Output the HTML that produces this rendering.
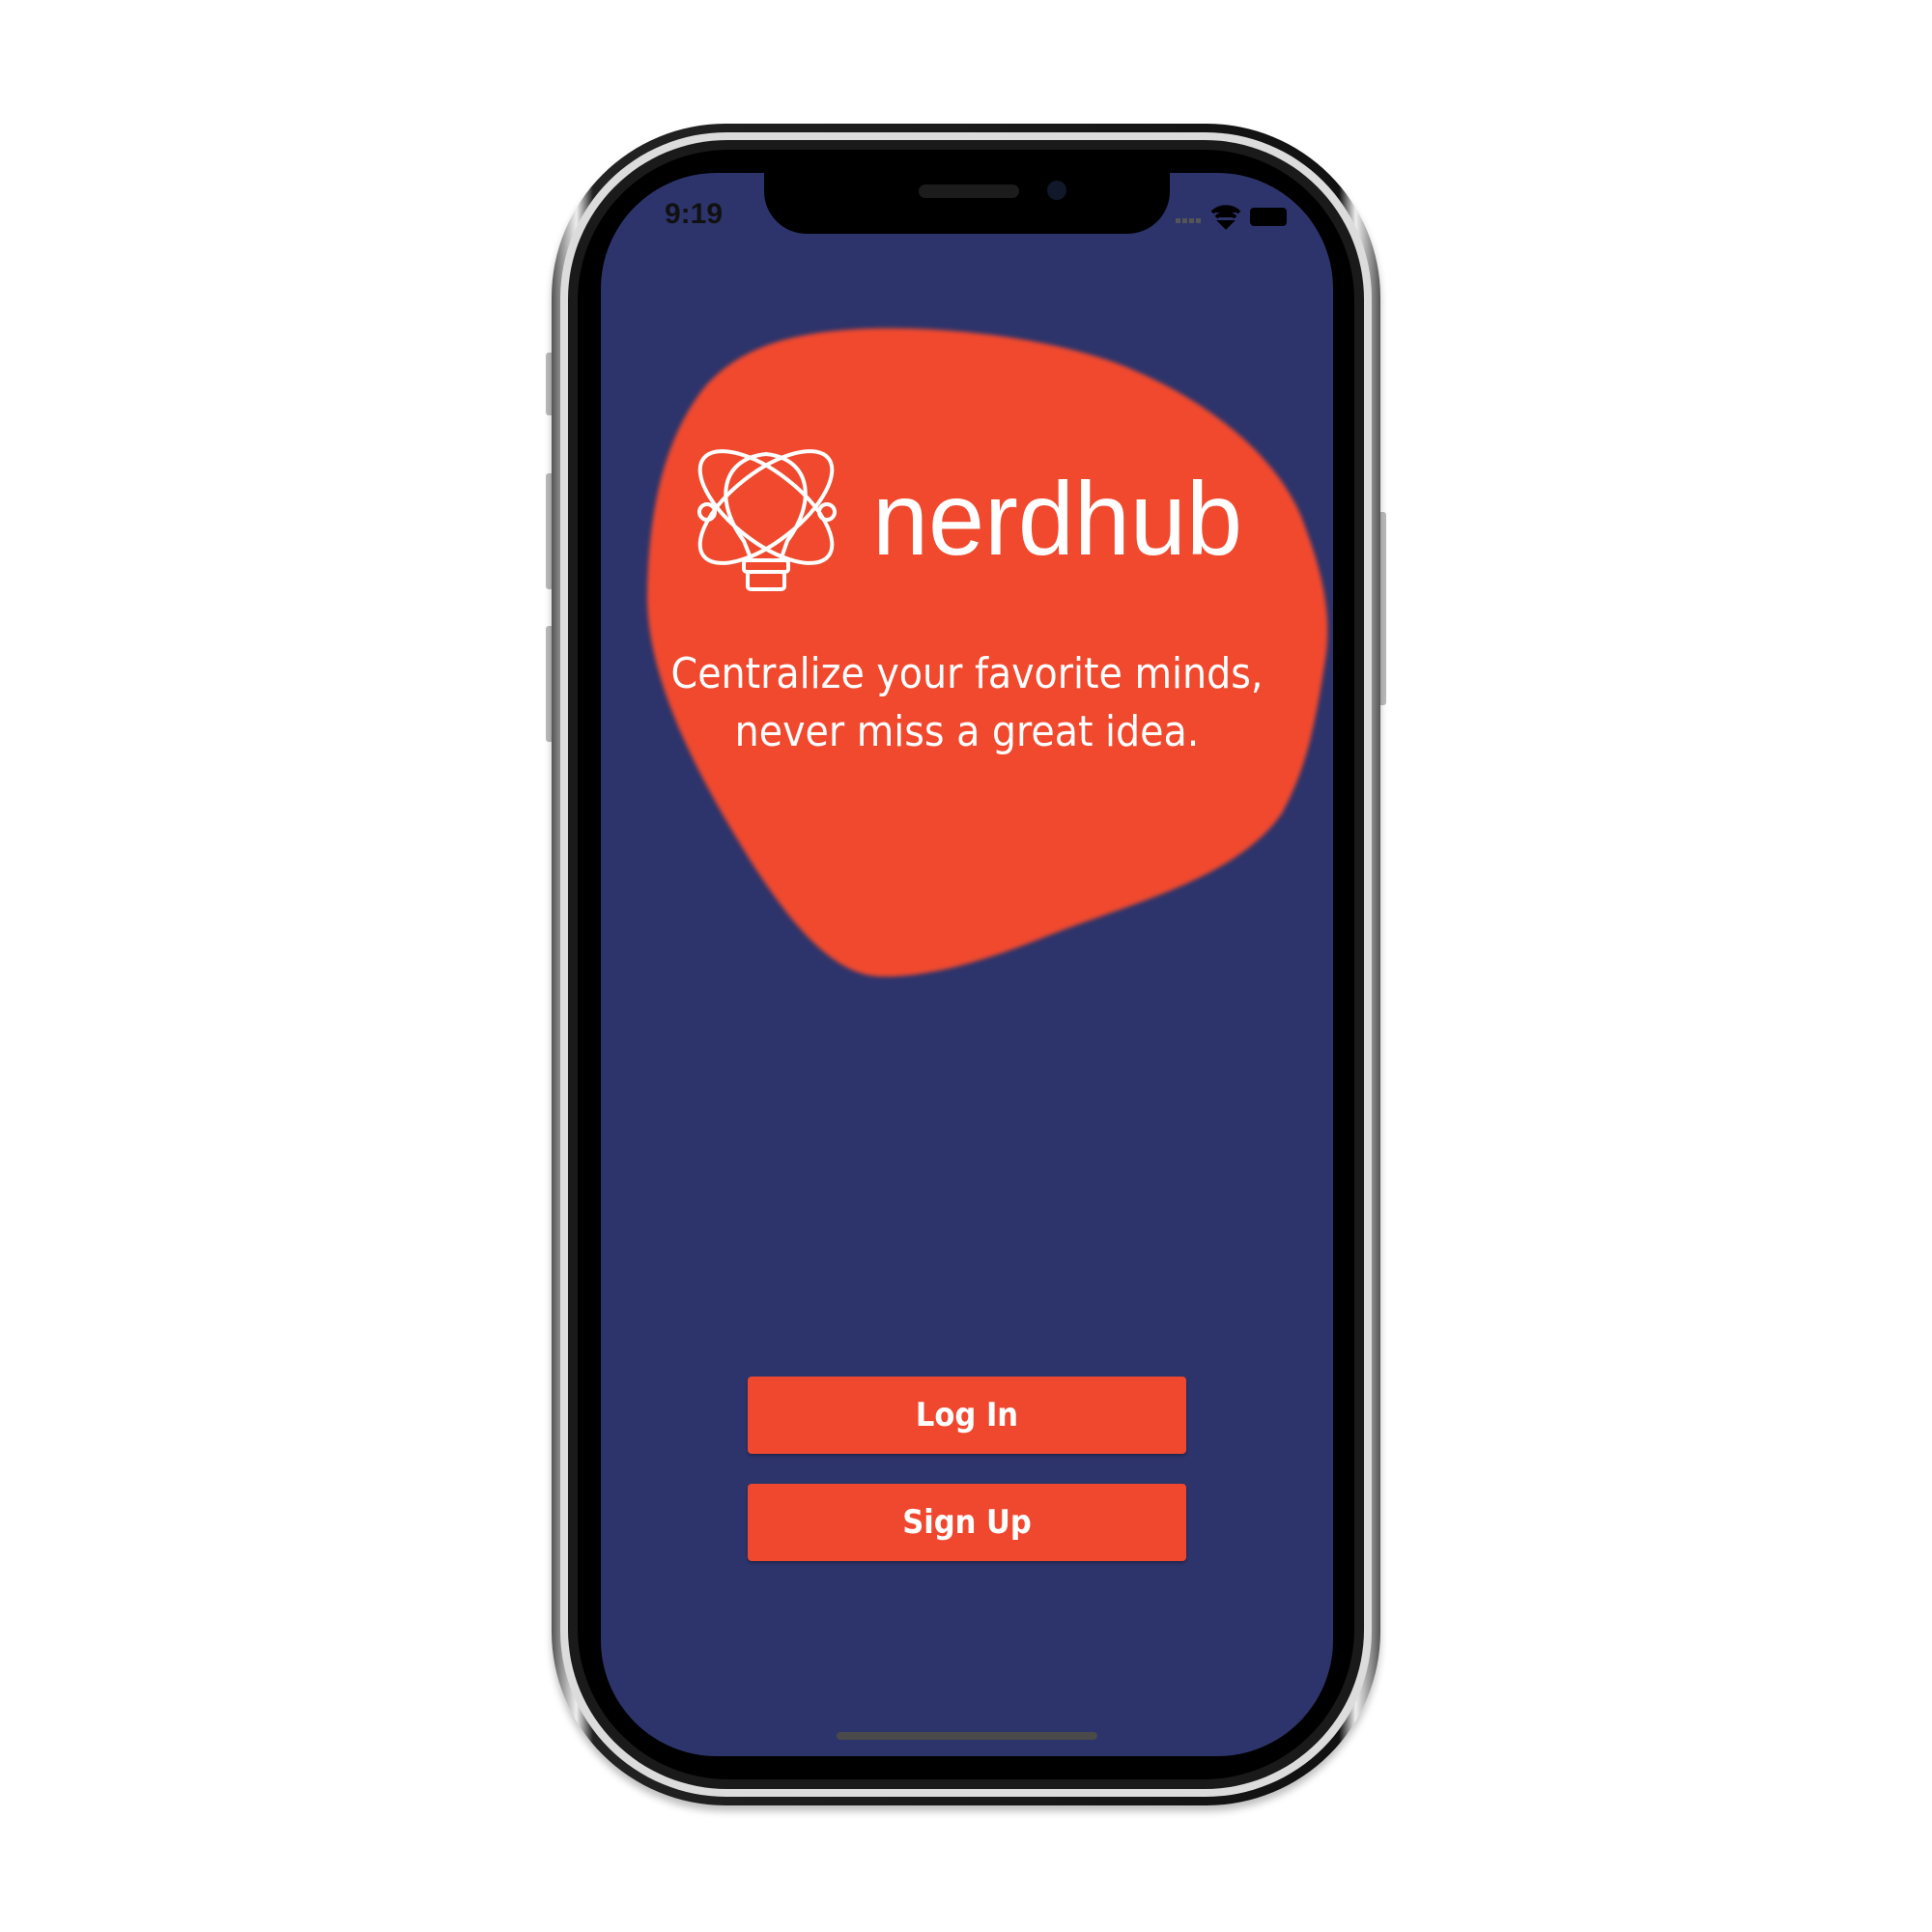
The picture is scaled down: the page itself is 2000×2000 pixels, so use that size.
<!DOCTYPE html>
<html><head><style>
html,body{margin:0;padding:0;background:#fff;width:2000px;height:2000px;overflow:hidden}
.abs{position:absolute}
.f1{left:571px;top:128px;width:858px;height:1741px;border-radius:180px;background:linear-gradient(90deg,#555,#eee 3%,#222 5%,#111 95%,#eee 97%,#555);box-shadow:0 6px 8px rgba(0,0,0,.25)}
.f2{left:580px;top:137px;width:840px;height:1723px;border-radius:172px;background:#dcdcdc}
.f3{left:588px;top:145px;width:824px;height:1707px;border-radius:165px;background:#1a1a1a}
.f4{left:598px;top:155px;width:804px;height:1687px;border-radius:156px;background:#000}
.scr{left:622px;top:179px;width:758px;height:1639px;border-radius:120px;background:#2d346b;overflow:hidden}
.notch{left:169px;top:-2px;width:420px;height:65px;background:#000;border-radius:0 0 44px 44px}
.btn{left:152px;width:454px;height:80px;background:#f0482f;border-radius:4px;color:#fff;font:bold 34px "DejaVu Sans Condensed","Liberation Sans",sans-serif;text-align:center;line-height:80px;box-shadow:0 2px 3px rgba(0,0,0,.3)}
.side{background:#bbb;border-radius:3px}
</style></head><body>
<div class="abs side" style="left:565px;top:365px;width:10px;height:65px"></div>
<div class="abs side" style="left:565px;top:490px;width:10px;height:120px"></div>
<div class="abs side" style="left:565px;top:648px;width:10px;height:120px"></div>
<div class="abs side" style="left:1425px;top:530px;width:10px;height:200px"></div>
<div class="abs f1"></div><div class="abs f2"></div><div class="abs f3"></div><div class="abs f4"></div>
<div class="abs scr">
<svg class="abs" style="left:0;top:0" width="758" height="1639" viewBox="622 179 758 1639">
<defs><filter id="b"><feGaussianBlur stdDeviation="2"/></filter></defs>
<path filter="url(#b)" fill="#f0482f" d="M906,340 C1000,338 1110,355 1173,383 C1260,420 1330,480 1352,548 C1375,610 1378,650 1371,689 C1360,760 1350,800 1327,842 C1280,910 1170,935 1084,969 C1020,995 960,1012 912,1011 C860,1010 815,950 778,893 C720,800 668,700 670,612 C672,520 690,450 730,400 C770,355 830,342 906,340 Z"/>
<g fill="none" stroke="#fff" stroke-width="4" stroke-linecap="round">
<ellipse cx="793" cy="525" rx="82" ry="36" transform="rotate(38 793 525)"/>
<ellipse cx="793" cy="525" rx="82" ry="36" transform="rotate(-38 793 525)"/>
<path d="M770,560 C740,520 745,475 793,470 C840,475 845,520 815,560 L808,580 L778,580 Z"/>
<rect x="770" y="580" width="46" height="12" rx="3"/><rect x="774" y="592" width="38" height="18" rx="3"/>
<circle cx="732" cy="530" r="8"/><circle cx="856" cy="530" r="8"/>
</g>
<text x="903" y="574" fill="#fff" font-family="Liberation Sans,sans-serif" font-size="108" textLength="383" lengthAdjust="spacingAndGlyphs">nerdhub</text>
<text x="1001" y="712" fill="#fff" text-anchor="middle" font-family="DejaVu Sans Condensed,Liberation Sans,sans-serif" font-size="44">Centralize your favorite minds,</text>
<text x="1001" y="772" fill="#fff" text-anchor="middle" font-family="DejaVu Sans Condensed,Liberation Sans,sans-serif" font-size="44">never miss a great idea.</text>
</svg>
<div class="abs notch">
<div class="abs" style="left:160px;top:14px;width:104px;height:14px;border-radius:7px;background:#1c1c1c"></div>
<div class="abs" style="left:293px;top:10px;width:20px;height:20px;border-radius:50%;background:#10182a"></div>
</div>
<div class="abs" style="left:66px;top:26px;font:600 30px 'Liberation Sans',sans-serif;color:#111">9:19</div>
<svg class="abs" style="left:595px;top:33px" width="120" height="26">
<g fill="#555"><rect x="0" y="14" width="5" height="5"/><rect x="7" y="14" width="5" height="5"/><rect x="14" y="14" width="5" height="5"/><rect x="21" y="14" width="5" height="5"/></g>
<path d="M38,8 A20,20 0 0 1 66,8 M42,13 A14,14 0 0 1 62,13 M47,18 L52,23 L57,18 Z" stroke="#000" stroke-width="4" fill="#000"/>
<rect x="77" y="3" width="38" height="19" rx="4" fill="#000"/>
</svg>
<div class="abs btn" style="top:1246px">Log In</div>
<div class="abs btn" style="top:1357px">Sign Up</div>
<div class="abs" style="left:244px;top:1614px;width:270px;height:8px;border-radius:4px;background:#4a4a4a"></div>
</div>
</body></html>
